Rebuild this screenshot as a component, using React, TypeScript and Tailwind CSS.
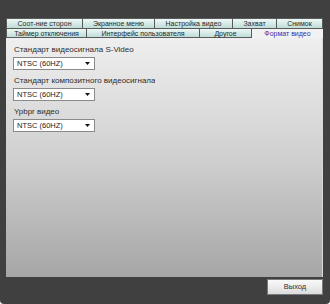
const row1 = [
  { label: 'Соот-ние сторон', w: 'w-[77px]' },
  { label: 'Экранное меню', w: 'w-[72px]' },
  { label: 'Настройка видео', w: 'w-[78px]' },
  { label: 'Захват', w: 'w-[44px]' },
  { label: 'Снимок', w: 'w-[46px]' },
]

const row2 = [
  { label: 'Таймер отключения', w: 'w-[81px]', active: false },
  { label: 'Интерфейс пользователя', w: 'w-[113px]', active: false },
  { label: 'Другое', w: 'w-[52px]', active: false },
  { label: 'Формат видео', w: 'w-[71px]', active: true },
]

const fields = [
  { label: 'Стандарт видеосигнала S-Video', value: 'NTSC (60HZ)' },
  { label: 'Стандарт композитного видеосигнала', value: 'NTSC (60HZ)' },
  { label: 'Ypbpr видео', value: 'NTSC (60HZ)' },
]

function Select({ value }: { value: string }) {
  return (
    <div className="flex h-[13px] w-[82px] items-center justify-between border border-[#8a8a8a] bg-white pl-[3px] pr-[4px] text-[7.5px] leading-none text-[#222]">
      <span>{value}</span>
      <svg width="5" height="3" viewBox="0 0 5 3">
        <path d="M0 0h5L2.5 3z" fill="#111" />
      </svg>
    </div>
  )
}

export default function App() {
  return (
    <div className="flex h-[304px] w-[330px] flex-col overflow-hidden rounded-b-[4px] bg-[#404040] pl-[6px] pr-[7px] pt-[18px] font-['Liberation_Sans',Arial,sans-serif]">
      <div className="flex h-[10px]">
        {row1.map((t) => (
          <div
            key={t.label}
            className={`${t.w} flex items-center justify-center border-r border-t border-[#5a5a5a] bg-gradient-to-b from-[#eef8f6] to-[#bfddd8] text-[7px] leading-none text-[#2a2a2a] first:border-l`}
          >
            {t.label}
          </div>
        ))}
      </div>
      <div className="flex h-[10px]">
        {row2.map((t) => (
          <div
            key={t.label}
            className={
              t.active
                ? `${t.w} flex items-center justify-center border-t border-[#5a5a5a] bg-[#f2f2f2] text-[7px] leading-none text-[#3b2fb0]`
                : `${t.w} flex items-center justify-center border-r border-t border-b border-[#5a5a5a] bg-gradient-to-b from-[#eef8f6] to-[#bfddd8] text-[7px] leading-none text-[#2a2a2a] first:border-l`
            }
          >
            {t.label}
          </div>
        ))}
      </div>
      <div className="flex h-[239px] flex-col border-r border-[#d8d8d8] bg-gradient-to-b from-[#efefef] via-[#d0d0d0] to-[#a6a6a6] pl-[7px] pt-[4px]">
        {fields.map((f) => (
          <div key={f.label} className="mb-[3px] flex flex-col">
            <div className="h-[15px] w-[142px] overflow-hidden whitespace-nowrap pl-[1px] text-[8px] leading-[15px] text-[#2e2e2e]">
              {f.label}
            </div>
            <Select value={f.value} />
          </div>
        ))}
      </div>
      <div className="flex justify-end pt-[2px]">
        <button className="h-[16px] w-[56px] border border-[#7a7a7a] bg-gradient-to-b from-[#fafafa] to-[#dcdcdc] text-[7.5px] leading-none text-[#333]">
          Выход
        </button>
      </div>
    </div>
  )
}
